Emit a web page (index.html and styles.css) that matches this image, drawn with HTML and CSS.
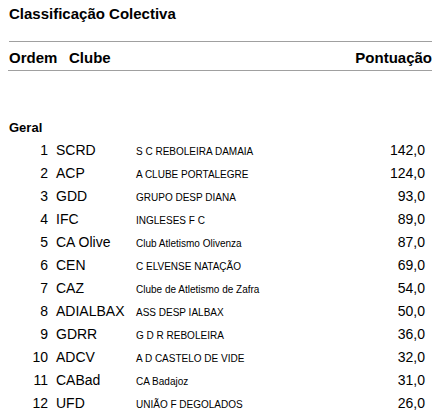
FILE: index.html
```html
<!DOCTYPE html>
<html lang="pt">
<head>
<meta charset="utf-8">
<title>Classificação Colectiva</title>
<link rel="stylesheet" href="styles.css">
</head>
<body>
<div class="page">
  <h1 class="title">Classificação Colectiva</h1>
  <div class="head">
    <span class="h-ordem">Ordem</span>
    <span class="h-clube">Clube</span>
    <span class="h-pont">Pontuação</span>
  </div>
  <h2 class="group">Geral</h2>
  <div class="rows">
    <div class="row"><span class="rank">1</span><span class="code">SCRD</span><span class="name">S C REBOLEIRA DAMAIA</span><span class="pts">142,0</span></div>
    <div class="row"><span class="rank">2</span><span class="code">ACP</span><span class="name">A CLUBE PORTALEGRE</span><span class="pts">124,0</span></div>
    <div class="row"><span class="rank">3</span><span class="code">GDD</span><span class="name">GRUPO DESP DIANA</span><span class="pts">93,0</span></div>
    <div class="row"><span class="rank">4</span><span class="code">IFC</span><span class="name">INGLESES F C</span><span class="pts">89,0</span></div>
    <div class="row"><span class="rank">5</span><span class="code">CA Olive</span><span class="name">Club Atletismo Olivenza</span><span class="pts">87,0</span></div>
    <div class="row"><span class="rank">6</span><span class="code">CEN</span><span class="name">C ELVENSE NATAÇÃO</span><span class="pts">69,0</span></div>
    <div class="row"><span class="rank">7</span><span class="code">CAZ</span><span class="name">Clube de Atletismo de Zafra</span><span class="pts">54,0</span></div>
    <div class="row"><span class="rank">8</span><span class="code">ADIALBAX</span><span class="name">ASS DESP IALBAX</span><span class="pts">50,0</span></div>
    <div class="row"><span class="rank">9</span><span class="code">GDRR</span><span class="name">G D R REBOLEIRA</span><span class="pts">36,0</span></div>
    <div class="row"><span class="rank">10</span><span class="code">ADCV</span><span class="name">A D CASTELO DE VIDE</span><span class="pts">32,0</span></div>
    <div class="row"><span class="rank">11</span><span class="code">CABad</span><span class="name">CA Badajoz</span><span class="pts">31,0</span></div>
    <div class="row"><span class="rank">12</span><span class="code">UFD</span><span class="name">UNIÃO F DEGOLADOS</span><span class="pts">26,0</span></div>
  </div>
</div>
</body>
</html>
```

FILE: styles.css
```css
html, body {
  margin: 0;
  padding: 0;
  background: #ffffff;
}

body {
  font-family: "Liberation Sans", Arial, sans-serif;
  color: #000000;
}

.page {
  width: 424px;
  padding: 5px 0 0 8px;
}

.title {
  margin: 0 0 0 1px;
  font-size: 15px;
  font-weight: bold;
  line-height: 18px;
  height: 37px;
  border-bottom: 1px solid #a0a0a0;
  box-sizing: border-box;
}

.head {
  display: flex;
  align-items: baseline;
  font-size: 15px;
  font-weight: bold;
  height: 29px;
  padding-top: 7px;
  box-sizing: border-box;
  border-bottom: 1px solid #a0a0a0;
  line-height: 17px;
}

.h-ordem {
  margin-left: 1px;
  width: 60px;
}

.h-clube {
  flex: 1;
}

.h-pont {
  text-align: right;
}

.group {
  margin: 49px 0 0 1px;
  font-size: 13px;
  font-weight: bold;
  line-height: 15px;
}

.rows {
  display: flex;
  flex-direction: column;
  margin-top: 4px;
}

.row {
  display: grid;
  grid-template-columns: 40px 80px 1fr auto;
  align-items: baseline;
  height: 23px;
  line-height: 23px;
}

.rank {
  font-size: 14px;
  text-align: right;
}

.code {
  font-size: 14px;
  padding-left: 8px;
}

.name {
  font-size: 10px;
  padding-left: 8px;
}

.pts {
  font-size: 14px;
  text-align: right;
  padding-right: 7px;
}
```
